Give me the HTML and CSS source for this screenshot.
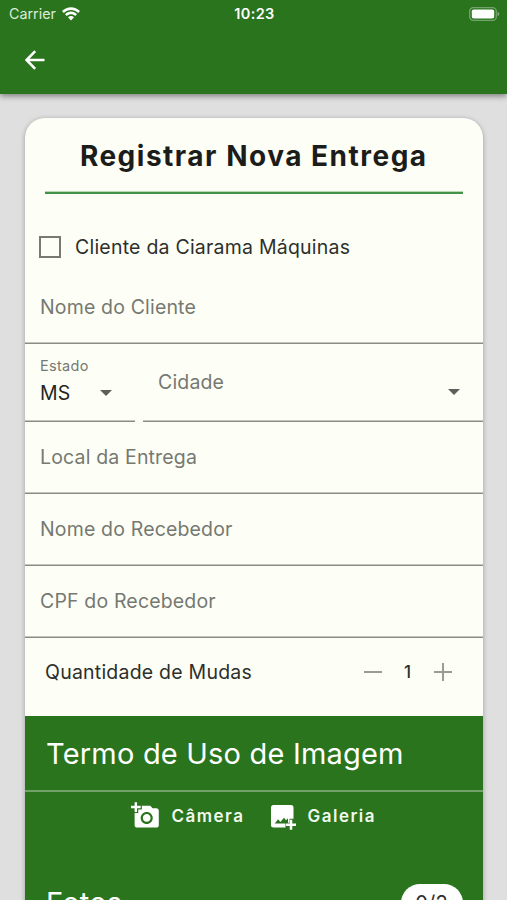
FILE: index.html
```html
<!DOCTYPE html>
<html lang="pt-BR">
<head>
<meta charset="utf-8">
<title>Registrar Nova Entrega</title>
<link rel="stylesheet" href="styles.css">
</head>
<body>
<header class="app-bar">
  <div class="status">
    <div class="carrier"><span class="carrier-name">Carrier</span>
      <svg class="wifi" viewBox="0 0 18 14"><path d="M0 4.100C5-1.200 13-1.200 18 4.100L16.200 6C12.200 1.900 5.800 1.900 1.800 6ZM3 7.200C6.400 3.700 11.600 3.700 15 7.200L13.200 9C10.800 6.600 7.200 6.600 4.800 9ZM6 10.300C7.800 8.700 10.200 8.700 12 10.300L9 13.500Z"/></svg>
    </div>
    <span class="clock">10:23</span>
    <svg class="battery" viewBox="0 0 31 14"><rect x=".7" y=".7" width="26.600" height="12.600" rx="3.600" fill="none" stroke="#fff" stroke-opacity=".35" stroke-width="1.300"/><rect x="2.800" y="2.400" width="22.400" height="9.200" rx="1.800" fill="#fff"/><path d="M28.600 4.800C30.700 5.600 30.700 8.400 28.600 9.200Z" fill="#fff" fill-opacity=".45"/></svg>
  </div>
  <svg class="back" viewBox="0 0 20 20"><path d="M19.500 10H2M10.200 1.200L1.500 10l8.700 8.800"/></svg>
</header>
<main class="card">
  <h1 class="title">Registrar Nova Entrega</h1>
  <label class="check-row"><span class="box"></span><span class="label">Cliente da Ciarama Máquinas</span></label>
  <div class="field first">Nome do Cliente</div>
  <div class="selects">
    <div class="select state">
      <span class="caption">Estado</span>
      <span class="value">MS</span>
      <svg class="arrow" viewBox="0 0 12 6"><path d="M0 0h12L6 6z"/></svg>
    </div>
    <div class="select city">
      <span>Cidade</span>
      <svg class="arrow" viewBox="0 0 12 6"><path d="M0 0h12L6 6z"/></svg>
    </div>
  </div>
  <div class="field">Local da Entrega</div>
  <div class="field">Nome do Recebedor</div>
  <div class="field">CPF do Recebedor</div>
  <div class="quantity">
    <span class="label">Quantidade de Mudas</span>
    <div class="stepper">
      <svg viewBox="0 0 18 18"><path d="M0 9h18"/></svg>
      <span class="count">1</span>
      <svg viewBox="0 0 18 18"><path d="M0 9h18M9 0v18"/></svg>
    </div>
  </div>
  <section class="panel">
    <h2 class="panel-title">Termo de Uso de Imagem</h2>
    <div class="actions">
      <div class="action">
        <svg class="icon camera" viewBox="0 0 24 24"><path d="M3 4V1h2v3h3v2H5v3H3V6H0V4h3zm3 6V7h3V4h7l1.830 2H21c1.100 0 2 .900 2 2v12c0 1.100-.900 2-2 2H5c-1.100 0-2-.900-2-2V10h3zm7 9c2.760 0 5-2.240 5-5s-2.240-5-5-5-5 2.240-5 5 2.240 5 5 5zm-3.200-5c0 1.770 1.430 3.200 3.200 3.200s3.200-1.430 3.200-3.200-1.430-3.200-3.200-3.200-3.200 1.430-3.200 3.200z"/></svg>
        <span>Câmera</span>
      </div>
      <div class="action">
        <svg class="icon gallery" viewBox="0 0 25 25"><path d="M2.500 0h17.500a2.500 2.500 0 0 1 2.500 2.500v11.200h-4v4h-4v4.800H2.500A2.500 2.500 0 0 1 0 20V2.500A2.500 2.500 0 0 1 2.500 0z"/><path class="cut" d="M3.700 18.500l3.400-4.200 2.300 2.700 3.600-4.300 2 2.500 2-1.900v5.200z"/><path class="plus" d="M20 14.800v10M15 19.800h10"/></svg>
        <span>Galeria</span>
      </div>
    </div>
    <div class="photos"><span>Fotos</span><span class="badge">0/2</span></div>
  </section>
</main>
</body>
</html>
```
FILE: styles.css
```css
* { box-sizing: border-box; }
body {
  margin: 0;
  height: 900px;
  overflow: hidden;
  background: #dfdfdf;
  font-family: Inter, "Liberation Sans", sans-serif;
  font-size: 19.5px;
  color: #2e2f2c;
  white-space: nowrap;
}
svg { display: block; flex: none; }
.app-bar {
  height: 94px;
  background: #29741d;
  box-shadow: 0 2px 6px rgba(0, 0, 0, .45);
  color: #fff;
}
.status {
  display: grid;
  grid-template-columns: 1fr auto 1fr;
  align-items: center;
  height: 27px;
  padding: 0 7px 0 9px;
}
.carrier { display: flex; align-items: center; gap: 6px; }
.carrier-name { font-size: 14.3px; color: #dcebd9; }
.wifi { width: 18px; height: 14px; fill: #fff; }
.clock { font-size: 14.5px; font-weight: 600; letter-spacing: .35px; }
.battery { width: 31px; height: 14px; justify-self: end; }
.back {
  width: 20px;
  height: 20px;
  margin: 23px 0 0 25px;
  fill: none;
  stroke: #fff;
  stroke-width: 2.6;
}
.card {
  width: 457.5px;
  height: 820px;
  margin: 24px 0 0 25px;
  overflow: hidden;
  border-radius: 20px 20px 0 0;
  background: #fdfff6;
  box-shadow: 0 1px 5px rgba(0, 0, 0, .3);
}
.title {
  height: 76px;
  margin: 0 20px;
  border-bottom: 2px solid #43924a;
  box-shadow: inset 0 -1px #b6d8b4;
  font-size: 28px;
  font-weight: 700;
  letter-spacing: 1.5px;
  line-height: 76px;
  text-align: center;
  color: #1c1d1a;
}
.check-row {
  display: flex;
  align-items: center;
  gap: 14px;
  height: 106px;
  padding-left: 14px;
}
.box { width: 22px; height: 22px; border: 2px solid #777973; }
.label { letter-spacing: .22px; }
.field, .select {
  border-bottom: 1px solid #898b85;
  box-shadow: inset 0 -1px #c4c6be;
  color: #767872;
  letter-spacing: .16px;
}
.field {
  display: flex;
  align-items: center;
  height: 72px;
  padding: 0 0 1px 15px;
}
.first { height: 73px; margin-top: -29px; }
.selects { display: flex; gap: 8px; height: 78px; }
.state {
  width: 110px;
  display: grid;
  grid-template-columns: 60px auto;
  grid-template-rows: 32px 24px;
  align-items: center;
  align-content: start;
  padding: 5px 0 0 15px;
}
.caption { grid-column: 1 / 3; font-size: 14.5px; letter-spacing: .3px; }
.value { color: #242522; }
.arrow { width: 12px; height: 6px; fill: #5d5f5a; }
.city {
  display: flex;
  flex: 1;
  justify-content: space-between;
  align-items: center;
  padding: 0 23px 2px 15px;
}
.city .arrow { margin-top: 21px; }
.quantity {
  display: flex;
  justify-content: space-between;
  align-items: center;
  height: 78px;
  padding: 0 31px 11px 20px;
}
.stepper { display: flex; align-items: center; gap: 20px; }
.stepper svg { width: 18px; height: 18px; stroke: #999b95; stroke-width: 2; fill: none; }
.count { width: 12px; text-align: center; font-size: 17px; font-weight: 500; }
.panel { height: 200px; background: #29741d; color: #fff; }
.panel-title {
  height: 76px;
  margin: 0;
  padding-left: 21px;
  border-bottom: 2px solid #71a369;
  font-size: 29px;
  font-weight: 400;
  letter-spacing: .2px;
  line-height: 75px;
}
.actions {
  display: flex;
  justify-content: center;
  gap: 27px;
  height: 48px;
  align-items: center;
  font-size: 17px;
  font-weight: 600;
  letter-spacing: 1.5px;
  color: #f0f8ed;
}
.action { display: flex; align-items: center; gap: 11px; }
.icon { fill: #fff; }
.camera { width: 29px; height: 29px; margin-top: -1px; }
.gallery { width: 25px; height: 25px; margin-top: 2px; }
.gallery .cut { fill: #29741d; }
.gallery .plus { fill: none; stroke: #fff; stroke-width: 2.5; }
.photos {
  display: flex;
  justify-content: space-between;
  align-items: flex-start;
  margin-top: 45px;
  padding: 0 20px 0 21px;
  font-size: 29px;
  letter-spacing: .2px;
  line-height: 36px;
}
.badge {
  width: 62px;
  height: 38px;
  margin-top: -1px;
  border-radius: 19px;
  background: #fff;
  color: #2e2f2c;
  font-size: 20px;
  line-height: 39px;
  text-align: center;
}
```
